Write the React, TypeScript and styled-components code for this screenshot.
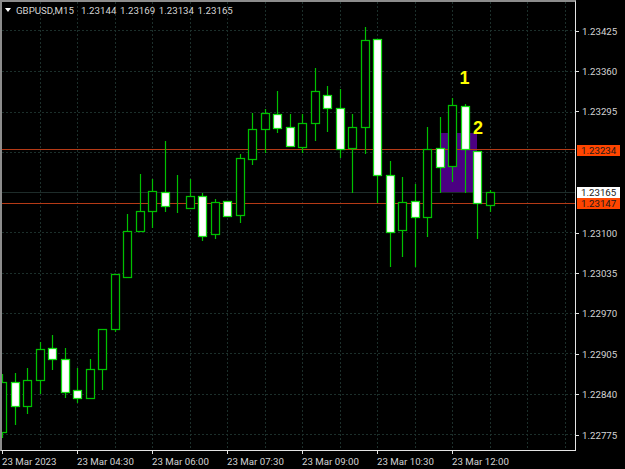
import * as React from 'react';
import styled, { createGlobalStyle } from 'styled-components';

interface ICandle {
  x: number;
  high: number;
  low: number;
  top: number;
  bottom: number;
  bear?: boolean;
}

const candles: ICandle[] = [
  { x: 2, high: 374, low: 438, top: 382, bottom: 432 },
  { x: 15, high: 373, low: 425, top: 382, bottom: 406, bear: true },
  { x: 27.5, high: 368, low: 414, top: 380, bottom: 406 },
  { x: 40, high: 342, low: 394, top: 349, bottom: 380 },
  { x: 52.5, high: 335, low: 370, top: 348, bottom: 359, bear: true },
  { x: 65, high: 348, low: 398, top: 359, bottom: 392, bear: true },
  { x: 77.5, high: 368, low: 403, top: 390, bottom: 398, bear: true },
  { x: 90, high: 359, low: 398, top: 369, bottom: 398 },
  { x: 102.5, high: 329, low: 390, top: 329, bottom: 369 },
  { x: 115, high: 274, low: 332, top: 274, bottom: 329 },
  { x: 127.5, high: 214, low: 277, top: 231, bottom: 277 },
  { x: 140, high: 174, low: 231, top: 211, bottom: 231 },
  { x: 152.5, high: 179, low: 228, top: 191, bottom: 211 },
  { x: 165, high: 141, low: 212, top: 192, bottom: 206, bear: true },
  { x: 177.5, high: 175, low: 213, top: 207, bottom: 207 },
  { x: 190, high: 179, low: 208, top: 196, bottom: 208 },
  { x: 202.5, high: 193, low: 241, top: 196, bottom: 236, bear: true },
  { x: 215, high: 199, low: 239, top: 202, bottom: 234 },
  { x: 227.5, high: 201, low: 217, top: 201, bottom: 216, bear: true },
  { x: 240, high: 154, low: 223, top: 158, bottom: 215 },
  { x: 252.5, high: 113, low: 165, top: 129, bottom: 159 },
  { x: 265, high: 109, low: 153, top: 113, bottom: 129 },
  { x: 277.5, high: 91, low: 133, top: 114, bottom: 128, bear: true },
  { x: 290, high: 114, low: 147, top: 127, bottom: 146, bear: true },
  { x: 302.5, high: 114, low: 153, top: 123, bottom: 147 },
  { x: 315, high: 68, low: 141, top: 91, bottom: 123 },
  { x: 327.5, high: 86, low: 132, top: 95, bottom: 108, bear: true },
  { x: 340, high: 89, low: 158, top: 108, bottom: 149, bear: true },
  { x: 352.5, high: 114, low: 193, top: 127, bottom: 148 },
  { x: 365, high: 27, low: 154, top: 40, bottom: 127 },
  { x: 377.5, high: 39, low: 203, top: 39, bottom: 175, bear: true },
  { x: 390, high: 161, low: 267, top: 175, bottom: 232, bear: true },
  { x: 402.5, high: 177, low: 257, top: 202, bottom: 230 },
  { x: 415, high: 184, low: 267, top: 201, bottom: 217, bear: true },
  { x: 427.5, high: 127, low: 237, top: 149, bottom: 217 },
  { x: 440, high: 117, low: 193, top: 148, bottom: 167, bear: true },
  { x: 452.5, high: 98, low: 182, top: 105, bottom: 166 },
  { x: 465, high: 104, low: 193, top: 106, bottom: 149, bear: true },
  { x: 477.5, high: 151, low: 239, top: 151, bottom: 203, bear: true },
  { x: 490, high: 190, low: 212, top: 192, bottom: 205 },
];

const gridX = [40, 77, 115, 152, 190, 227, 265, 302, 340, 377, 415, 452, 490, 527, 565];
const gridY = [30, 71, 112, 152, 192, 232, 273, 313, 353, 394, 434];

// empty strings are the two levels hidden behind the price tags
const prices = [
  '1.23425',
  '1.23360',
  '1.23295',
  '',
  '',
  '1.23100',
  '1.23035',
  '1.22970',
  '1.22905',
  '1.22840',
  '1.22775',
];

const tags = [
  { y: 144.5, text: '1.23234', tone: 'orange' },
  { y: 186.5, text: '1.23165', tone: 'white' },
  { y: 198, text: '1.23147', tone: 'orange' },
];

const times = [
  '23 Mar 2023',
  '23 Mar 04:30',
  '23 Mar 06:00',
  '23 Mar 07:30',
  '23 Mar 09:00',
  '23 Mar 10:30',
  '23 Mar 12:00',
];

const Global = createGlobalStyle`
  html, body {
    margin: 0;
    padding: 0;
    background: #000;
  }
`;

const Terminal = styled.div`
  width: 625px;
  height: 469px;
  background: #000;
  overflow: hidden;
  display: grid;
  grid-template-columns: 576px 49px;
  grid-template-rows: 451px 18px;
  font-family: Roboto, "Liberation Sans", Arial, sans-serif;
  font-size: 9.7px;
  color: #d4d4d4;
`;

const Plot = styled.div`
  position: relative;
  border-top: 2px solid #8c8c8c;
  border-left: 2px solid #8c8c8c;
  border-right: 1px solid #e4e4e4;
  border-bottom: 1px solid #e4e4e4;
  box-sizing: border-box;
`;

const ChartSvg = styled.svg`
  display: block;
`;

const Title = styled.div`
  position: absolute;
  left: 3px;
  top: 2px;
  display: flex;
  align-items: center;
  gap: 5px;
  height: 12px;
  white-space: pre;
  word-spacing: 1.2px;
`;

const Caret = styled.span`
  width: 0;
  height: 0;
  border-left: 3.5px solid transparent;
  border-right: 3.5px solid transparent;
  border-top: 4px solid #fff;
`;

const Marker = styled.text`
  font-family: "Liberation Sans", Arial, sans-serif;
  font-size: 18px;
  font-weight: bold;
  fill: #ffff00;
  text-anchor: middle;
`;

const PriceAxis = styled.div`
  position: relative;
  display: flex;
  flex-direction: column;
  padding-top: 11px;
`;

const PriceRow = styled.div`
  height: 40.4px;
  flex: none;
  display: flex;
  align-items: center;
`;

const Tick = styled.i`
  display: block;
  width: 3px;
  height: 1px;
  margin-right: 3px;
  background: #e4e4e4;
`;

const PriceTag = styled.div<{ $tone: string }>`
  position: absolute;
  left: 1px;
  width: 43px;
  height: 11px;
  box-sizing: border-box;
  padding-left: 4px;
  display: flex;
  align-items: center;
  background: ${p => (p.$tone === 'orange' ? '#ff4500' : '#fff')};
  color: #1a1a1a;
`;

const TimeAxis = styled.div`
  grid-column: 1 / -1;
  display: flex;
  padding-left: 2px;
`;

const TimeCell = styled.div`
  width: 75px;
  flex: none;
  display: flex;
  flex-direction: column;
  align-items: flex-start;
  gap: 2px;
  white-space: nowrap;
  line-height: 12px;
`;

const TimeTick = styled.i`
  display: block;
  width: 1px;
  height: 3px;
  background: #e4e4e4;
`;

const Candle = ({ x, high, low, top, bottom, bear }: ICandle) => {
  const center = Math.round(x - 0.5) + 0.5;
  return (
    <g>
      <line x1={center} x2={center} y1={high} y2={low} stroke="#00c000" strokeWidth={1.2} />
      <rect
        x={center - 4}
        y={top + 0.5}
        width={8}
        height={Math.max(bottom - top, 0)}
        fill={bear ? '#fff' : '#000'}
        stroke={bear ? '#14e014' : '#00c000'}
        strokeWidth={1.25}
      />
    </g>
  );
};

export default function App() {
  return (
    <Terminal>
      <Global />
      <Plot>
        <ChartSvg width={573} height={448} viewBox="2 2 573 448">
          {gridX.map(x => (
            <line
              key={x}
              x1={x + 0.5}
              x2={x + 0.5}
              y1={2}
              y2={450}
              stroke="#1c2f2b"
              strokeDasharray="2 2"
            />
          ))}
          {gridY.map(y => (
            <line
              key={y}
              x1={2}
              x2={575}
              y1={y + 0.5}
              y2={y + 0.5}
              stroke="#1c2f2b"
              strokeDasharray="2 2"
            />
          ))}
          <rect x={440} y={133} width={37} height={59} fill="#4b0082" />
          <line x1={2} x2={575} y1={192.5} y2={192.5} stroke="#1e2c2a" />
          <line x1={2} x2={575} y1={149.5} y2={149.5} stroke="#b53a16" />
          <line x1={2} x2={575} y1={203.5} y2={203.5} stroke="#b53a16" />
          {candles.map(c => (
            <Candle key={c.x} {...c} />
          ))}
          <Marker x={464.5} y={83.5}>1</Marker>
          <Marker x={478} y={133.5}>2</Marker>
        </ChartSvg>
        <Title>
          <Caret />
          GBPUSD,M15  1.23144 1.23169 1.23134 1.23165
        </Title>
      </Plot>
      <PriceAxis>
        {prices.map((text, i) => (
          <PriceRow key={i}>
            {text && <Tick />}
            {text}
          </PriceRow>
        ))}
        {tags.map(t => (
          <PriceTag key={t.text} $tone={t.tone} style={{ top: t.y }}>
            {t.text}
          </PriceTag>
        ))}
      </PriceAxis>
      <TimeAxis>
        {times.map(text => (
          <TimeCell key={text}>
            <TimeTick />
            {text}
          </TimeCell>
        ))}
      </TimeAxis>
    </Terminal>
  );
}
